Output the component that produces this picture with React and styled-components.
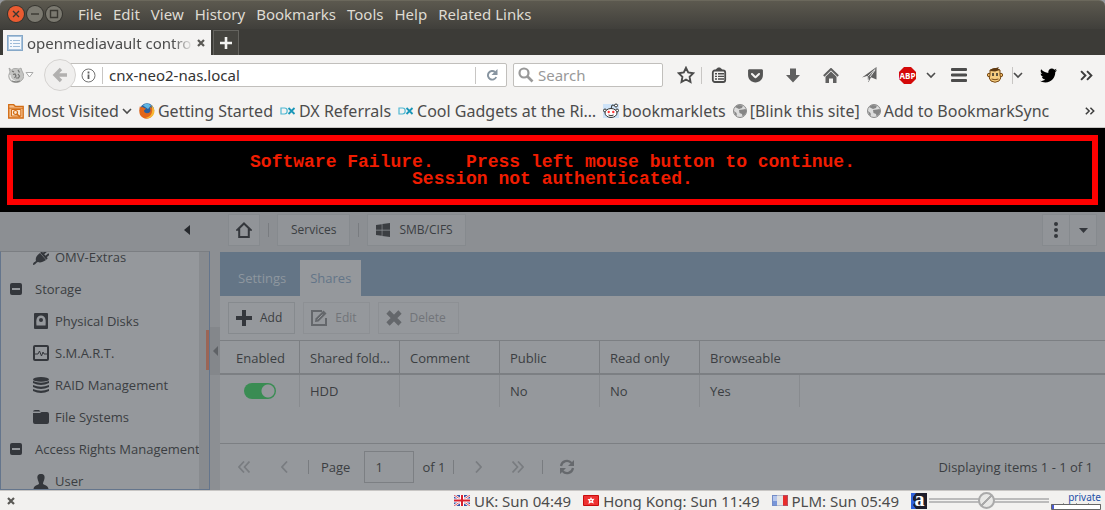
import React from 'react'
import styled, { createGlobalStyle } from 'styled-components'
import { FaWindows, FaTwitter, FaGetPocket } from 'react-icons/fa'

const menus = ['File', 'Edit', 'View', 'History', 'Bookmarks', 'Tools', 'Help', 'Related Links']
const columns = ['Enabled', 'Shared fold...', 'Comment', 'Public', 'Read only', 'Browseable']
const bookmarks = [
  { icon: <MostVisitedIcon />, label: 'Most Visited', menu: true },
  { icon: <FirefoxIcon />, label: 'Getting Started' },
  { icon: <DxIcon />, label: 'DX Referrals' },
  { icon: <DxIcon />, label: 'Cool Gadgets at the Ri…' },
  { icon: <RedditIcon />, label: 'bookmarklets' },
  { icon: <GlobeIcon />, label: '[Blink this site]' },
  { icon: <GlobeIcon />, label: 'Add to BookmarkSync' },
]
const tree = [
  { icon: <PlugIcon />, label: 'OMV-Extras' },
  { group: true, icon: <MinusIcon />, label: 'Storage' },
  { icon: <DiskIcon />, label: 'Physical Disks' },
  { icon: <SmartIcon />, label: 'S.M.A.R.T.' },
  { icon: <RaidIcon />, label: 'RAID Management' },
  { icon: <FolderIcon />, label: 'File Systems' },
  { group: true, icon: <MinusIcon />, label: 'Access Rights Management' },
  { icon: <UserIcon />, label: 'User' },
]

function App() {
  return (
    <Window>
      <GlobalStyle />
      <TitleBar>
        <WindowButtons>
          <WindowButton close aria-label="Close"><svg viewBox="0 0 16 16"><path d="M5 5l6 6M11 5l-6 6" /></svg></WindowButton>
          <WindowButton aria-label="Minimize"><svg viewBox="0 0 16 16"><path d="M4 8h8" /></svg></WindowButton>
          <WindowButton aria-label="Maximize"><svg viewBox="0 0 16 16"><path d="M4.5 4.5h7v7h-7z" /></svg></WindowButton>
        </WindowButtons>
        {menus.map(m => <MenuButton key={m}>{m}</MenuButton>)}
      </TitleBar>
      <TabStrip>
        <BrowserTab>
          <svg width="16" height="16" viewBox="0 0 16 16">
            <rect x=".5" y=".5" width="15" height="15" fill="#a9c3dc" stroke="#86a8c8" />
            <rect x="2" y="2" width="12" height="12" fill="#f4f8fc" />
            <path d="M3 5.5h2M3 8.5h2M3 11.5h2M6 5.5h7M6 8.5h7M6 11.5h7" stroke="#9dbbd8" />
          </svg>
          <TabTitle>openmediavault contro</TabTitle>
          <CloseButton aria-label="Close tab"><CrossIcon /></CloseButton>
        </BrowserTab>
        <NewTab aria-label="New tab"><svg width="14" height="14" viewBox="0 0 14 14"><path d="M7 1v12M1 7h12" stroke="#f4f4f2" strokeWidth="2.6" /></svg></NewTab>
      </TabStrip>
      <NavBar>
        <GestureButton aria-label="Extension">
          <svg width="16" height="16" viewBox="0 0 16 16">
            <path d="M1 1l2.500 2Q5 1 8 1.500L11 2l2-1 1 3q4 6-1 10-5 3.500-10 0-4-4-1-9z" fill="#c4c4c2" stroke="#a0a09e" strokeWidth=".8" />
            <path d="M4 4l2 1M10 3l1.500 2.500M5 7.500l2-.5 1 2-1.500 2M10 7l1.500 2-1 2H8" fill="none" stroke="#71716f" strokeWidth="1.200" />
            <path d="M2 8q0 5 5 6" fill="none" stroke="#f2f2f0" strokeWidth="1.200" />
            <path d="M4 14q4 2 8 0" fill="none" stroke="#7c7c7a" />
          </svg>
          <svg width="9" height="6" viewBox="0 0 9 6"><path d="M1 .5h7L4.500 5z" fill="#fff" stroke="#aaa" /></svg>
        </GestureButton>
        <BackButton aria-label="Back"><svg width="16" height="16" viewBox="0 0 16 16"><path d="M9 2L3 8l6 6M3.500 8H15" fill="none" stroke="#b1b0af" strokeWidth="3.400" /></svg></BackButton>
        <AddressBox>
          <svg width="15" height="15" viewBox="0 0 15 15"><circle cx="7.5" cy="7.5" r="6.500" fill="none" stroke="#737373" /><path d="M7.500 6.500V11M7.500 3.500v2" stroke="#606060" strokeWidth="1.800" /></svg>
          <Rule />
          <AddressInput aria-label="Address" defaultValue="cnx-neo2-nas.local" />
          <Rule />
          <ReloadButton aria-label="Reload"><svg width="12" height="12" viewBox="0 0 12 12"><path d="M9 3A4.300 4.300 0 1 0 10.200 8" fill="none" stroke="#8794a0" strokeWidth="1.900" /><path d="M11.500 0v6h-6z" fill="#8794a0" /></svg></ReloadButton>
        </AddressBox>
        <SearchBox>
          <svg width="16" height="16" viewBox="0 0 16 16"><circle cx="6" cy="6" r="4.500" fill="none" stroke="#999" strokeWidth="2.200" /><path d="M9.500 9.500l5 5" stroke="#999" strokeWidth="2.600" /></svg>
          <SearchInput aria-label="Search" placeholder="Search" />
        </SearchBox>
        <NavButton w={30} aria-label="Bookmark"><svg width="18" height="18" viewBox="0 0 18 18"><path d="M9 1.800l2.200 4.700 5.100.7-3.700 3.600.9 5.200L9 13.500 4.500 16l.9-5.200L1.700 7.200l5.100-.7z" fill="none" stroke="#4c4c4c" strokeWidth="1.900" /></svg></NavButton>
        <Rule />
        <NavButton w={34} aria-label="Bookmarks list"><svg width="16" height="16" viewBox="0 0 16 16"><rect x="1.800" y="3.500" width="12.400" height="11.500" rx="2" fill="none" stroke="#4c4c4c" strokeWidth="1.800" /><path d="M5 3c0-1 1.500-1 1.700-2h2.600c.2 1 1.700 1 1.700 2z" fill="#4c4c4c" stroke="#4c4c4c" /><path d="M4 6.800h2M7 6.800h6M4 9.400h2M7 9.400h6M4 12h2M7 12h6" stroke="#4c4c4c" strokeWidth="1.400" /></svg></NavButton>
        <NavButton aria-label="Pocket"><FaGetPocket size={17} /></NavButton>
        <NavButton aria-label="Downloads"><svg width="14" height="15" viewBox="0 0 14 15"><path d="M4 .5h6V7h4l-7 7.500L0 7h4z" fill="#606060" /></svg></NavButton>
        <NavButton aria-label="Home"><svg width="16" height="15" viewBox="0 0 16 15"><path d="M.8 8L8 1l7.200 7" fill="none" stroke="#606060" strokeWidth="2" /><path d="M2.500 8.700L8 3.500l5.500 5.200V15H10v-4.500H6V15H2.500z" fill="#606060" /></svg></NavButton>
        <NavButton aria-label="Send"><svg width="15" height="16" viewBox="0 0 15 16"><path d="M14.500 0v12.500L9 10.300l-2.500 5L5 9 0 10.500z" fill="#606060" /><path d="M13.500 2L5.500 9.500l1 4.500M13 3L8 10" fill="none" stroke="#eee" strokeWidth=".9" /></svg></NavButton>
        <NavButton aria-label="Adblock">
          <svg width="17" height="17" viewBox="0 0 17 17"><path d="M5 0h7l5 5v7l-5 5H5l-5-5V5z" fill="#d40909" /><text x="8.500" y="11.500" textAnchor="middle" fontFamily="Open Sans, sans-serif" fontSize="8" fontWeight="700" fill="#fff">ABP</text></svg>
        </NavButton>
        <NavButton w={14} start aria-label="Adblock menu"><ChevronIcon /></NavButton>
        <NavButton aria-label="Menu"><svg width="16" height="14" viewBox="0 0 16 14"><path d="M1 1.500h14M1 7h14M1 12.500h14" stroke="#4c4c4c" strokeWidth="2.800" strokeLinecap="round" /></svg></NavButton>
        <NavButton w={34} aria-label="Greasemonkey"><MonkeyIcon /></NavButton>
        <Rule />
        <NavButton w={16} start aria-label="Greasemonkey menu"><ChevronIcon /></NavButton>
        <NavButton dark aria-label="Twitter"><FaTwitter size={17} /></NavButton>
        <NavButton aria-label="More tools"><MoreIcon size={13} /></NavButton>
      </NavBar>
      <BookmarkBar>
        {bookmarks.map(b => (
          <Bookmark key={b.label} href="#">
            {b.icon}
            <span>{b.label}</span>
            {b.menu && <ChevronIcon />}
          </Bookmark>
        ))}
        <MoreBookmarks aria-label="More bookmarks"><MoreIcon size={10} /></MoreBookmarks>
      </BookmarkBar>
      <Failure role="alert">
        <FailureFrame>
          <p>{'Software Failure.   Press left mouse button to continue.'}</p>
          <p>Session not authenticated.</p>
        </FailureFrame>
      </Failure>
      <Workspace>
        <Sidebar>
          <SidebarHead>
            <CollapseButton aria-label="Collapse navigation"><svg width="6" height="10" viewBox="0 0 6 10"><path d="M6 0v10L0 5z" fill="#26292d" /></svg></CollapseButton>
          </SidebarHead>
          <TreePanel>
            <Tree>
              {tree.map(t => (
                <TreeItem key={t.label} href="#" group={t.group}>
                  <TreeIcon group={t.group}>{t.icon}</TreeIcon>
                  {t.label}
                </TreeItem>
              ))}
            </Tree>
            <ScrollTrack><ScrollThumb /></ScrollTrack>
          </TreePanel>
        </Sidebar>
        <Splitter>
          <SplitHandle aria-label="Toggle navigation"><svg width="5" height="10" viewBox="0 0 5 10"><path d="M5 0v10L0 5z" fill="#5f6266" /></svg></SplitHandle>
        </Splitter>
        <Content>
          <Crumbs>
            <Button square aria-label="Home"><svg width="16" height="16" viewBox="0 0 16 16"><path d="M8 1.500l6.500 6.300H12.800V15H3.200V7.800H1.500z" fill="none" stroke="#34373c" strokeWidth="2" /></svg></Button>
            <Divider />
            <Button crumb wide>Services</Button>
            <Divider />
            <Button crumb><FaWindows size={16} />SMB/CIFS</Button>
            <MenuGroup>
              <Button square aria-label="Options"><svg width="4" height="16" viewBox="0 0 4 16"><circle cx="2" cy="2" r="2" /><circle cx="2" cy="8" r="2" /><circle cx="2" cy="14" r="2" /></svg></Button>
              <Button square aria-label="Open menu"><svg width="9" height="5" viewBox="0 0 9 5"><path d="M0 0h9L4.500 5z" /></svg></Button>
            </MenuGroup>
          </Crumbs>
          <Tabs role="tablist">
            <Tab role="tab">Settings</Tab>
            <Tab role="tab" aria-selected="true" active>Shares</Tab>
          </Tabs>
          <Toolbar>
            <Button><svg width="16" height="16" viewBox="0 0 16 16"><path d="M8 0v16M0 8h16" stroke="#34373c" strokeWidth="4" /></svg>Add</Button>
            <Button disabled><EditIcon />Edit</Button>
            <Button disabled><svg width="16" height="16" viewBox="0 0 16 16"><path d="M2 2l12 12M14 2L2 14" stroke="#64676b" strokeWidth="4.600" /></svg>Delete</Button>
          </Toolbar>
          <Grid>
            <colgroup>
              <col width="80" />
              {columns.slice(1).map(c => <col key={c} width="100" />)}
              <col />
            </colgroup>
            <thead>
              <tr>{columns.map(c => <th key={c} scope="col">{c}</th>)}<td /></tr>
            </thead>
            <tbody>
              <tr>
                <td><Toggle type="checkbox" defaultChecked aria-label="Enabled" /></td>
                <td>HDD</td>
                <td />
                <td>No</td>
                <td>No</td>
                <td>Yes</td>
                <td />
              </tr>
            </tbody>
          </Grid>
          <Pager>
            <PageButton disabled aria-label="First page"><PageArrow double /></PageButton>
            <PageButton disabled aria-label="Previous page"><PageArrow /></PageButton>
            <Divider />
            <PageLabel>Page<PageInput defaultValue="1" /></PageLabel>
            <span>of 1</span>
            <Divider />
            <PageButton disabled aria-label="Next page"><PageArrow right /></PageButton>
            <PageButton disabled aria-label="Last page"><PageArrow double right /></PageButton>
            <Divider />
            <PageButton aria-label="Refresh"><svg width="16" height="16" viewBox="0 0 16 16"><path d="M2 7a6 6 0 0 1 10.500-3M14 9a6 6 0 0 1-10.500 3" fill="none" stroke="#66696d" strokeWidth="2.200" /><path d="M15 1v6H9zM1 15V9h6z" fill="#66696d" /></svg></PageButton>
            <PageInfo>Displaying items 1 - 1 of 1</PageInfo>
          </Pager>
        </Content>
      </Workspace>
      <StatusBar>
        <CloseButton aria-label="Close bar"><CrossIcon /></CloseButton>
        <Clocks>
          <Clock>
            <svg width="16" height="11" viewBox="0 0 16 11"><path d="M0 0h16v11H0z" fill="#3553a5" /><path d="M0 0l16 11M16 0L0 11" stroke="#fff" strokeWidth="2.400" /><path d="M0 0l16 11M16 0L0 11" stroke="#d9404c" strokeWidth=".9" /><path d="M8 0v11M0 5.500h16" stroke="#fff" strokeWidth="4" /><path d="M8 0v11M0 5.500h16" stroke="#d8202e" strokeWidth="2" /></svg>
            UK: Sun 04:49
          </Clock>
          <Clock>
            <svg width="16" height="11" viewBox="0 0 16 11"><path d="M.5.5h15v10H.5z" fill="#ee3232" stroke="#c80d0d" /><path d="M8 2l1 2 2.500-.2L10 6l.8 2.500L8 7.500 5.500 9 6 6 4.500 4 7 4z" fill="#fff" /><circle cx="8" cy="5.500" r=".8" fill="#ee3232" /></svg>
            Hong Kong: Sun 11:49
          </Clock>
          <Clock>
            <svg width="16" height="11" viewBox="0 0 16 11"><path d="M0 0h6v11H0z" fill="#7795d8" /><path d="M1 1h4v5H1z" fill="#b5c6ec" /><path d="M5 0h6v11H5z" fill="#e4e4e4" /><path d="M11 0h5v11h-5z" fill="#e82c2c" /><path d="M.5.5h15v10H.5z" fill="none" stroke="#6f7fb0" strokeOpacity=".4" /></svg>
            PLM: Sun 05:49
          </Clock>
        </Clocks>
        <svg width="16" height="16" viewBox="0 0 16 16"><path d="M0 0h16v16H0z" fill="#1e1e2c" /><path d="M0 0h5L2 4v3l2 2-2 3 3 4H0z" fill="#2f62dc" /><text x="8.500" y="13" textAnchor="middle" fontFamily="Liberation Serif, serif" fontSize="20" fontWeight="700" fill="#fff">a</text></svg>
        <Speed type="range" min="0" max="100" defaultValue="48" aria-label="Speed" />
        <Privacy>
          private
          <svg width="50" height="7" viewBox="0 0 50 7"><path d="M12.500 0v2M25.500 0v2M37.500 0v2" stroke="#999" /><path d="M0 1h50v1H0z" fill="#777" /><path d="M.5 1.500h49v5H.5z" fill="#fff" stroke="#666" /><path d="M1 2h2v4H1z" fill="#4b5bd0" /></svg>
        </Privacy>
      </StatusBar>
    </Window>
  )
}

export default App

function CrossIcon() {
  return <svg width="8" height="8" viewBox="0 0 8 8"><path d="M1 1l6 6M7 1L1 7" stroke="#5a5955" strokeWidth="2.200" /></svg>
}

function ChevronIcon() {
  return <svg width="10" height="7" viewBox="0 0 10 7"><path d="M1 1l4 4 4-4" fill="none" stroke="#4c4c4c" strokeWidth="1.600" /></svg>
}

function MoreIcon({ size }) {
  return <svg width={size} height={size} viewBox="0 0 12 12"><path d="M1 2l4 4-4 4M6.500 2l4 4-4 4" fill="none" stroke="#3c3c3c" strokeWidth="1.800" /></svg>
}

function MostVisitedIcon() {
  return (
    <svg width="16" height="16" viewBox="0 0 16 16">
      <path d="M.7 15V1.700h5l1.500 1.600h8V15z" fill="#f6c08d" stroke="#d26c14" strokeWidth="1.300" />
      <path d="M3.500 13V6.500h9.300V13z" fill="#fbe6d0" stroke="#d26c14" />
      <path d="M.7 5.200h14.500" stroke="#d26c14" />
      <circle cx="7.500" cy="9.500" r="2" fill="none" stroke="#d26c14" strokeWidth="1.200" />
      <path d="M9 11l3 3" stroke="#d26c14" strokeWidth="1.500" />
    </svg>
  )
}

function FirefoxIcon() {
  return (
    <svg width="16" height="16" viewBox="0 0 16 16">
      <circle cx="8" cy="7.500" r="7.200" fill="#2a5f9e" />
      <path d="M4 2.500c2-2.500 6-2 8 0L9 6z" fill="#5fb6e4" />
      <path d="M1 3l1 1.500C3 3.500 4 4 5 5l2 .5-2 2c0 3 4 3.500 6 1.500 1-2 0-4-.5-5 4 0 5.500 5 3 8.500-3 4.500-9.500 4-12 0C0 10 0 6 1 3z" fill="#e2661a" />
      <path d="M12 2c4 2.500 4.500 8 1.500 11-2 2-5 2.500-7 2 4-1 6-3 6.500-6 .5-3 0-5-1-7z" fill="#f8b833" />
    </svg>
  )
}

function DxIcon() {
  return (
    <svg width="16" height="16" viewBox="0 0 16 16">
      <path d="M1 5h3.500q2.700 0 2.700 3t-2.700 3H1z" fill="none" stroke="#4fb8d2" strokeWidth="1.200" />
      <path d="M8.500 5l6 6M14.500 5l-6 6" stroke="#1996b8" strokeWidth="1.800" />
    </svg>
  )
}

function RedditIcon() {
  return (
    <svg width="16" height="16" viewBox="0 0 16 16">
      <path d="M0 1h16v14H0z" fill="#cee3f8" />
      <path d="M8 6l1-4 3 .5" fill="none" stroke="#333" />
      <circle cx="13" cy="2.500" r="1.500" fill="#fff" stroke="#333" />
      <circle cx="2" cy="7.500" r="1.500" fill="#fff" stroke="#333" />
      <circle cx="14" cy="7.500" r="1.500" fill="#fff" stroke="#333" />
      <ellipse cx="8" cy="10" rx="6" ry="4.500" fill="#fff" stroke="#333" />
      <circle cx="5.700" cy="9" r="1.200" fill="#f33" />
      <circle cx="10.300" cy="9" r="1.200" fill="#f33" />
      <path d="M5.500 12q2.500 1.500 5 0" fill="none" stroke="#333" />
    </svg>
  )
}

function GlobeIcon() {
  return (
    <svg width="14" height="14" viewBox="0 0 14 14">
      <circle cx="7" cy="7" r="6.500" fill="#dcdcdc" stroke="#8a8a8a" />
      <path d="M2 3l3-2 5 .5L9 4 6 5 4 4z" fill="#858585" />
      <path d="M6 6l4-.5L12.500 5l1 2-1 3-3 2.500-.5-2.500-2.500-1z" fill="#858585" />
      <path d="M1 7l2.500 2 .5 3-2-1.500z" fill="#858585" />
    </svg>
  )
}

function MonkeyIcon() {
  return (
    <svg width="16" height="16" viewBox="0 0 16 16">
      <circle cx="2" cy="8" r="1.700" fill="#edb866" stroke="#794b16" />
      <circle cx="14" cy="8" r="1.700" fill="#edb866" stroke="#794b16" />
      <path d="M3 3q5-3 10 0v5q2 3-1 6-4 2.500-8 0-3-3-1-6z" fill="#f6cd80" stroke="#794b16" />
      <path d="M3 4Q4 1 9 1l3-1-1 1.500 2 1.500-5 1.500z" fill="#5f3a12" />
      <path d="M6 6v3M10 6v3" stroke="#222" strokeWidth="1.400" />
      <path d="M4.500 12q3.500 1.500 7 0" fill="none" stroke="#794b16" />
    </svg>
  )
}

function MinusIcon() {
  return <svg width="12" height="12" viewBox="0 0 12 12"><rect width="12" height="12" rx="2" /><path d="M2 6h8" stroke="#95989c" strokeWidth="2" /></svg>
}

function PlugIcon() {
  return <svg width="16" height="16" viewBox="0 0 16 16"><path d="M0 16c0-3 2-3 3-4-1-3 1-6 4-8l6 7c-3 2-6 3-8 2-2 0-2 3-5 3z" /><path d="M8 3l6 7" stroke="#34373c" strokeWidth="2" /><path d="M10 5l3.500-3M12.500 8L16 5" stroke="#34373c" strokeWidth="2" /></svg>
}

function DiskIcon() {
  return <svg width="14" height="16" viewBox="0 0 14 16"><rect width="14" height="16" rx="1" /><path d="M2.500 12.500C2 8 2 2.500 7 2.500s5 5.500 4.500 10z" fill="#95989c" /><circle cx="7" cy="7" r="2" /></svg>
}

function SmartIcon() {
  return <svg width="16" height="16" viewBox="0 0 16 16"><rect x="1" y="1" width="14" height="14" rx="1" fill="none" stroke="#34373c" strokeWidth="2" /><path d="M2 9h3l1.500-3 2 5L10 7l1 2h3" fill="none" stroke="#34373c" /></svg>
}

function RaidIcon() {
  return (
    <svg width="16" height="16" viewBox="0 0 16 16">
      <ellipse cx="8" cy="2.400" rx="8" ry="2.400" />
      <path d="M0 4q8 3.500 16 0v2q-8 4-16 0zM0 8q8 3.500 16 0v2q-8 4-16 0zM0 12q8 3.500 16 0v2q-8 4-16 0z" />
    </svg>
  )
}

function FolderIcon() {
  return <svg width="16" height="14" viewBox="0 0 16 14"><path d="M0 2q0-2 2-2h4l1.500 1.500H0zM0 3h7l1.500-1H14q2 0 2 2v8q0 2-2 2H2q-2 0-2-2z" /></svg>
}

function UserIcon() {
  return <svg width="16" height="15" viewBox="0 0 16 15"><path d="M8 0c3 0 4 2 3.500 4.500S10 8 10 10c1 1 5 1 5.500 5H.5C1 11 5 11 6 10c0-2-1-3-1.500-5.500S5 0 8 0z" /></svg>
}

function EditIcon() {
  return (
    <svg width="16" height="16" viewBox="0 0 16 16">
      <path d="M11 1H1v14h14V8" fill="none" stroke="#64676b" strokeWidth="2" />
      <path d="M4 12l.5-3.500L12.500.5 15.500 3.500l-8 8z" fill="#64676b" />
      <path d="M6.500 9.500l5-5" stroke="#95989c" />
    </svg>
  )
}

function PageArrow({ double, right }) {
  const w = double ? 12 : 7
  return (
    <svg width={w} height="12" viewBox={`0 0 ${w} 12`}>
      <g transform={right ? `translate(${w} 0) scale(-1 1)` : undefined} fill="none" stroke="#797c80" strokeWidth="1.700">
        <path d="M6 0.500L1 6l5 5.500" />
        {double && <path d="M11.500 0.500l-5 5.500 5 5.500" />}
      </g>
    </svg>
  )
}

const GlobalStyle = createGlobalStyle`
  * {
    box-sizing: border-box;
  }

  body {
    margin: 0;
    background: #95989c;
    font-family: 'Noto Sans', sans-serif;
  }

  button, input {
    font: inherit;
    color: inherit;
    padding: 0;
    border: none;
    background: none;
  }

  svg {
    flex-shrink: 0;
  }

  p {
    margin: 0;
  }
`

const Window = styled.div`
  min-height: 100vh;
  display: flex;
  flex-direction: column;
  font-size: 15px;
  color: #4c4c4c;
`

const TitleBar = styled.header`
  display: flex;
  align-items: center;
  gap: 11px;
  height: 29px;
  padding: 0 8px 2px;
  background: linear-gradient(#5c594f, #403f3b);
  border-top: 1px solid #6b685c;
  border-radius: 6px 6px 0 0;
  color: #dfdbd2;
`

const WindowButtons = styled.div`
  display: flex;
  gap: 3px;
  margin-right: 5px;
`

const WindowButton = styled.button.withConfig({ shouldForwardProp: p => p !== 'close' })`
  width: 16px;
  height: 16px;
  border-radius: 50%;
  background: ${p => p.close ? '#ea5b31' : '#7b7970'};
  box-shadow: 0 0 0 1px #35342f;

  svg {
    display: block;
    fill: none;
    stroke: #3a3832;
    stroke-width: 1.4px;
  }
`

const MenuButton = styled.button`
  line-height: 24px;
  white-space: nowrap;
`

const TabStrip = styled.div`
  display: flex;
  align-items: flex-end;
  gap: 2px;
  height: 26px;
  padding-left: 3px;
  background: #3c3b37;
`

const BrowserTab = styled.div`
  display: flex;
  align-items: center;
  gap: 4px;
  width: 208px;
  height: 25px;
  padding: 0 6px 0 4px;
  background: #f4f3f2;
`

const TabTitle = styled.span`
  flex: 1;
  overflow: hidden;
  white-space: nowrap;
  line-height: 24px;
  mask-image: linear-gradient(to right, #000 88%, transparent);
`

const CloseButton = styled.button`
  display: flex;
`

const NewTab = styled.button`
  display: flex;
  align-items: center;
  justify-content: center;
  width: 26px;
  height: 25px;
  background: #45443f;
  border: 1px solid #65645f;
  border-bottom: none;
`

const NavBar = styled.nav`
  display: flex;
  align-items: center;
  height: 40px;
  padding-left: 8px;
  background: #f4f3f2;
`

const GestureButton = styled.button`
  display: flex;
  align-items: center;
  gap: 1px;
  width: 36px;
`

const BackButton = styled.button`
  display: flex;
  align-items: center;
  justify-content: center;
  width: 32px;
  height: 32px;
  border: 1px solid #d5d3d1;
  border-radius: 50%;
  background: #f0efee;
  z-index: 1;
`

const AddressBox = styled.div`
  display: flex;
  align-items: center;
  flex: 1;
  gap: 6px;
  height: 24px;
  min-width: 0;
  margin-left: -8px;
  padding: 0 4px 0 12px;
  background: #fff;
  border: 1px solid #c1bfbc;
  border-radius: 2px;
  color: #333;
`

const Rule = styled.i`
  width: 1px;
  height: 17px;
  background: #c8c6c4;
`

const AddressInput = styled.input`
  flex: 1;
  min-width: 0;
  outline: none;
`

const ReloadButton = styled.button`
  display: flex;
  justify-content: center;
  width: 20px;
`

const SearchBox = styled(AddressBox)`
  flex: 0 0 150px;
  gap: 4px;
  margin: 0 8px 0 6px;
  padding: 0 4px;
`

const SearchInput = styled(AddressInput)`
  &::placeholder {
    color: #999;
    opacity: 1;
  }
`

const NavButton = styled.button.withConfig({ shouldForwardProp: p => !['w', 'start', 'dark'].includes(p) })`
  display: flex;
  align-items: center;
  justify-content: ${p => p.start ? 'flex-start' : 'center'};
  width: ${p => p.w || 38}px;
  height: 32px;
  color: ${p => p.dark ? '#000' : '#555'};
`

const BookmarkBar = styled.nav`
  display: flex;
  align-items: center;
  gap: 7px;
  height: 33px;
  padding: 0 10px 0 8px;
  background: #f4f3f2;
  border-bottom: 1px solid #c8c6c4;
  font-size: 16px;
`

const Bookmark = styled.a`
  display: flex;
  align-items: center;
  gap: 3px;
  color: inherit;
  text-decoration: none;
  white-space: nowrap;
`

const MoreBookmarks = styled.button`
  display: flex;
  margin-left: auto;
`

const Failure = styled.section`
  padding: 7px;
  background: #000;
`

const FailureFrame = styled.div`
  padding: 13px 8px 11px;
  border: 6px solid #f00;
  color: #f01c00;
  font: bold 18px/17px 'Liberation Mono', monospace;
  text-align: center;
  white-space: pre-wrap;
`

const Workspace = styled.main`
  display: flex;
  flex: 1;
  background: #8c8f93;
  color: #3b3e42;
  font: 13px/20px 'Open Sans', sans-serif;
`

const Sidebar = styled.aside`
  display: flex;
  flex-direction: column;
  width: 210px;
`

const SidebarHead = styled.div`
  display: flex;
  align-items: center;
  justify-content: flex-end;
  height: 39px;
  padding-right: 20px;
`

const CollapseButton = styled.button`
  display: flex;
  padding-bottom: 4px;
`

const TreePanel = styled.div`
  display: flex;
  flex: 1 0 238px;
  height: 238px;
  overflow: hidden;
  background: #95989c;
  border: 1px solid #64758c;
  border-top-color: #7b7e82;
`

const Tree = styled.nav`
  flex: 1;
  min-width: 0;
  margin-top: -11px;
`

const TreeItem = styled.a.withConfig({ shouldForwardProp: p => p !== 'group' })`
  display: flex;
  align-items: center;
  gap: ${p => p.group ? 13 : 6}px;
  height: 32px;
  padding-left: ${p => p.group ? 9 : 32}px;
  color: inherit;
  text-decoration: none;
  white-space: nowrap;
`

const TreeIcon = styled.span.withConfig({ shouldForwardProp: p => p !== 'group' })`
  display: flex;
  justify-content: center;
  width: ${p => p.group ? 12 : 16}px;
  fill: #34373c;
`

const ScrollTrack = styled.div`
  display: flex;
  align-items: center;
  justify-content: flex-end;
  width: 10px;
  padding-bottom: 42px;
  background: #888b8f;
`

const ScrollThumb = styled.div`
  width: 3px;
  height: 40px;
  background: #9b6556;
`

const Splitter = styled.div`
  display: flex;
  align-items: center;
  width: 10px;
`

const SplitHandle = styled.button`
  display: flex;
  align-items: center;
  justify-content: center;
  width: 10px;
  height: 48px;
  background: #84878b;
`

const Content = styled.section`
  display: flex;
  flex: 1;
  min-width: 0;
  flex-direction: column;
  background: #95989c;
`

const Crumbs = styled.div`
  display: flex;
  align-items: center;
  gap: 8px;
  height: 40px;
  padding: 0 8px 4px;
  background: #8c8f93;
`

const Button = styled.button.withConfig({ shouldForwardProp: p => !['square', 'crumb', 'wide'].includes(p) })`
  display: flex;
  align-items: center;
  justify-content: center;
  gap: 8px;
  min-width: 28px;
  height: 32px;
  padding: ${p => p.square ? '0 7px' : p.wide ? '0 13px' : '0 12px 0 7px'};
  background: ${p => p.square || p.crumb ? '#919498' : 'transparent'};
  border: 1px solid #868a8e;
  font-size: 12px;
  fill: #34373c;

  &:disabled {
    color: #717479;
    border-color: #8d9094;
  }
`

const Divider = styled.i`
  width: 1px;
  height: 14px;
  background: #797c80;
`

const MenuGroup = styled.div`
  display: flex;
  margin-left: auto;

  button + button {
    margin-left: -1px;
  }
`

const Tabs = styled.div`
  display: flex;
  gap: 4px;
  padding: 8px 8px 0;
  background: #647586;
`

const Tab = styled.button.withConfig({ shouldForwardProp: p => p !== 'active' })`
  height: 36px;
  padding: 0 10px;
  background: ${p => p.active ? '#95989c' : 'none'};
  color: ${p => p.active ? '#637588' : '#8e979f'};
`

const Toolbar = styled.div`
  display: flex;
  gap: 8px;
  padding: 6px 8px;
`

const Grid = styled.table`
  width: 100%;
  table-layout: fixed;
  border-collapse: separate;
  border-spacing: 0;
  border-top: 1px solid #7c7f83;

  th, td {
    height: 32px;
    padding: 0 10px;
    border-right: 1px solid #888b8f;
    text-align: left;
    font-weight: 400;
    white-space: nowrap;
  }

  thead th, thead td {
    height: 34px;
    padding-top: 2px;
    border-right-color: #7c7f83;
    border-bottom: 2px solid #7c7f83;
  }

  th:first-child {
    padding-left: 16px;
    padding-right: 0;
  }

  td:first-child {
    text-align: center;
  }

  th:nth-child(6), tr > :last-child {
    border-right: none;
  }
`

const Toggle = styled.input`
  appearance: none;
  display: block;
  width: 32px;
  height: 16px;
  margin: 0 auto;
  border-radius: 8px;
  background: radial-gradient(circle at 24px 8px, #95989c 6px, #3a8c53 7px);
`

const Pager = styled.footer`
  display: flex;
  align-items: center;
  gap: 8px;
  height: 47px;
  margin-top: auto;
  padding: 0 12px 0 8px;
  border-top: 1px solid #7c7f83;
`

const PageButton = styled.button`
  display: flex;
  align-items: center;
  justify-content: center;
  width: 32px;
  height: 32px;
`

const PageLabel = styled.label`
  display: flex;
  align-items: center;
  gap: 14px;
  margin-left: 4px;
`

const PageInput = styled.input`
  width: 50px;
  height: 32px;
  padding: 0 10px;
  border: 1px solid #7c7f83;
`

const PageInfo = styled.span`
  margin-left: auto;
`

const StatusBar = styled.footer`
  display: flex;
  align-items: center;
  gap: 2px;
  height: 20px;
  padding: 0 4px 0 7px;
  background: #f2f1ef;
  border-top: 1px solid #c8c6c4;
`

const Clocks = styled.div`
  display: flex;
  gap: 12px;
  margin: 0 10px 0 auto;
`

const Clock = styled.span`
  display: flex;
  align-items: center;
  gap: 4px;
  line-height: 18px;
`

const Speed = styled.input`
  appearance: none;
  width: 120px;
  height: 17px;
  margin: 0;
  background: linear-gradient(#bbb 2px, transparent 2px 3px, #bbb 3px) center / 100% 5px no-repeat;

  &::-webkit-slider-thumb {
    appearance: none;
    width: 17px;
    height: 17px;
    border: 2px solid #aaa;
    border-radius: 50%;
    background: linear-gradient(135deg, #e8e8e6 44%, #aaa 44% 56%, #e8e8e6 56%);
  }
`

const Privacy = styled.div`
  display: flex;
  flex-direction: column;
  align-items: flex-end;
  color: #2450a8;
  font: 10px/12px 'Noto Sans', sans-serif;
`
